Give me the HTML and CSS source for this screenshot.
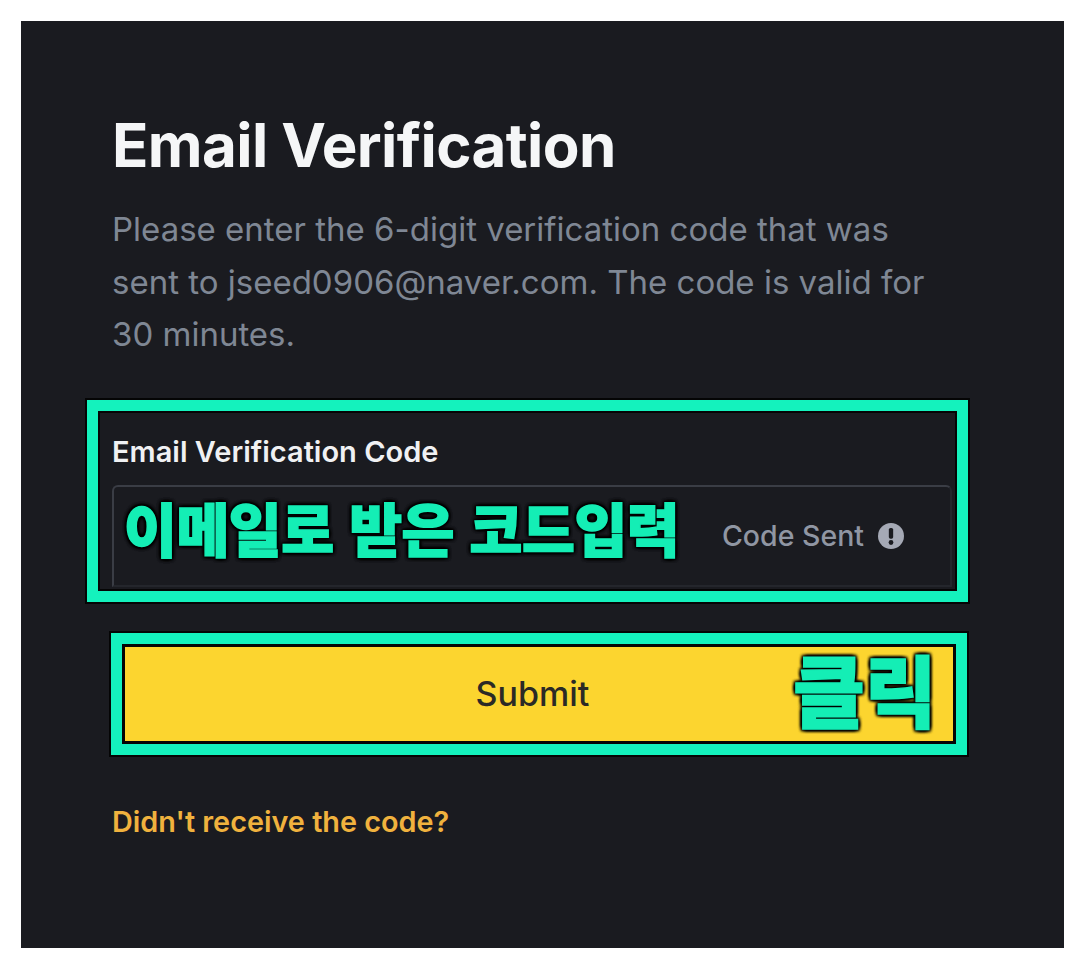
FILE: index.html
```html
<!DOCTYPE html>
<html lang="en">
<head>
<meta charset="utf-8">
<title>Email Verification</title>
<link rel="stylesheet" href="styles.css">
</head>
<body>
<main class="panel">
  <h1 class="title">Email Verification</h1>
  <p class="desc">Please enter the 6-digit verification code that was sent to jseed0906@naver.com. The code is valid for 30 minutes.</p>
  <section class="field-frame">
    <label class="label">Email Verification Code</label>
    <div class="input">
      <span class="sent">Code Sent
        <svg class="sent-icon" viewBox="0 0 24 24" aria-hidden="true"><circle cx="12" cy="12" r="12" fill="#a5a9b5"/><rect x="10" y="4.5" width="4" height="10" rx="1.6" fill="#1a1b20"/><circle cx="12" cy="18" r="2.2" fill="#1a1b20"/></svg>
      </span>
    </div>
    <span class="note note-code" lang="ko">이메일로 받은 코드입력</span>
  </section>
  <section class="button-frame">
    <button class="submit">Submit</button>
    <span class="note note-click" lang="ko">클릭</span>
  </section>
  <a class="resend">Didn't receive the code?</a>
</main>
</body>
</html>
```
FILE: styles.css
```css
* { box-sizing: border-box; }
html, body { margin: 0; background: #fff; }
body { width: 1084px; height: 968px; padding: 21px 20px 20px 21px; font-family: "Inter", "Roboto", "Liberation Sans", sans-serif; }
.panel { height: 927px; background: #1a1b20; padding: 88px 95px 0 91px; display: flex; flex-direction: column; }
.title { margin: 0; font-size: 60px; line-height: 72px; font-weight: 700; color: #f5f6f7; letter-spacing: -0.6px; }
.desc { margin: 22px 0 0; width: 820px; font-size: 33px; line-height: 52.5px; color: #7f8794; }
.field-frame { position: relative; margin: 39px 0 0 -25px; width: 881px; height: 202px; border: 11px solid #14f2bd; box-shadow: 0 0 0 2px #050505, inset 0 0 0 2px #050505; padding: 23px 5px 5px 14px; }
.label { display: block; font-size: 29px; line-height: 36px; font-weight: 600; color: #f0f1f3; }
.input { margin-top: 15px; height: 102px; border: 2px solid #3a3d45; border-right-color: #24262c; border-bottom-color: #24262c; border-radius: 6px 6px 0 0; display: flex; align-items: center; justify-content: flex-end; padding-right: 46px; }
.sent { display: flex; align-items: center; gap: 14px; font-size: 28.5px; font-weight: 500; color: #9096a3; }
.sent-icon { width: 26px; height: 26px; }
.note { position: absolute; font-family: "Noto Sans CJK KR", sans-serif; font-weight: 900; color: #14eeb5; white-space: nowrap; -webkit-text-stroke: 1.5px #14eeb5; text-shadow: 0 0 4px #000, 0 0 4px #000, 0 0 4px #000, 2px 2px 3px #000, -2px -2px 3px #000, 2px -2px 3px #000, -2px 2px 3px #000; }
.note-code { left: 26px; top: 81px; font-size: 57.5px; line-height: 70px; letter-spacing: -0.5px; }
.button-frame { position: relative; margin: 31px 0 0 -1px; width: 856px; height: 122px; border: 11px solid #14f2bd; box-shadow: 0 0 0 2px #050505, inset 0 0 0 3px #050505; padding: 3px; }
.submit { width: 100%; height: 100%; border: 0; background: #fcd52f; color: #2b2a26; font: 500 34px "Inter", sans-serif; padding: 0 13px 0 0; }
.note-click { left: 671px; top: -1px; font-size: 78px; line-height: 90px; }
.resend { margin-top: 49px; font-size: 28.8px; line-height: 36px; font-weight: 600; color: #f0b23e; }
```
